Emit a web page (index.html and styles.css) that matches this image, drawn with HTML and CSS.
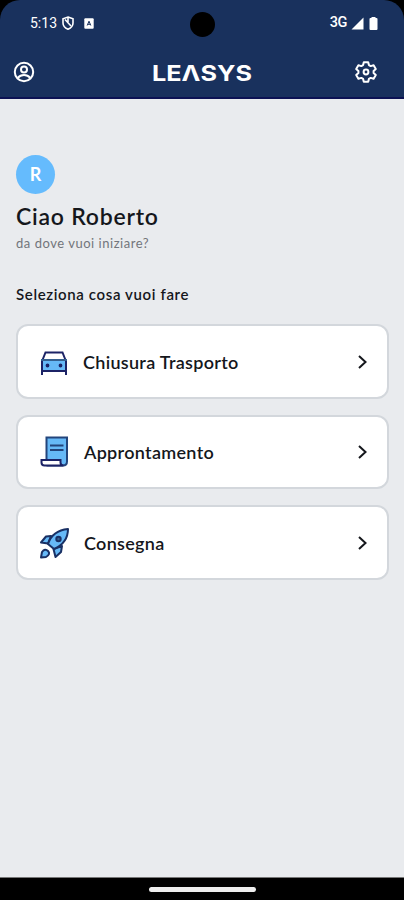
FILE: index.html
```html
<!DOCTYPE html>
<html lang="it">
<head>
<meta charset="utf-8">
<meta name="viewport" content="width=device-width, initial-scale=1">
<title>Leasys</title>
<link rel="stylesheet" href="styles.css">
</head>
<body>
<div class="phone">
  <header class="header">
    <div class="status">
      <span class="clock">5:13</span>
      <svg class="shield" width="14" height="14" viewBox="0 0 14 14"><path d="M7 1 12 2.800V7c0 2.800-2 5-5 6.200C4 12 2 9.800 2 7V2.800Z" fill="none" stroke="#fff" stroke-width="1.600"/><path d="M4 3.500 10 10M7 2v4" stroke="#fff" stroke-width="1.600"/></svg>
      <svg class="app" width="10" height="11" viewBox="0 0 10 11"><rect x=".3" y=".3" width="9.400" height="10.400" rx="1" fill="#fff"/><path d="m3.200 7.500 1.800-4.300 1.800 4.300M3.800 6.300h2.400" fill="none" stroke="#19315d" stroke-width="1"/></svg>
      <i class="camera"></i>
      <span class="network">3G</span>
      <svg class="signal" width="13" height="13" viewBox="0 0 13 13"><path d="M12.500.5v12H.5Z" fill="#fff"/></svg>
      <svg class="battery" width="9" height="13" viewBox="0 0 9 13"><path d="M2.500 0h4v1h1q1 0 1 1v10q0 1-1 1h-6q-1 0-1-1V2q0-1 1-1h1Z" fill="#fff"/></svg>
    </div>
    <nav class="bar">
      <svg class="user" width="22" height="22" viewBox="0 0 22 22" fill="none" stroke="#fff" stroke-width="2"><circle cx="11" cy="11" r="9.200"/><circle cx="11" cy="8.500" r="3"/><path d="M4.800 16.800c3.200-3.900 9.200-3.900 12.400 0"/></svg>
      <svg class="logo" width="104" height="34" viewBox="0 0 104 34"><text x="2" y="25.500" textLength="100" lengthAdjust="spacingAndGlyphs">LEΛSYS</text></svg>
      <svg class="gear" width="24" height="24" viewBox="0 0 24 24" fill="none" stroke="#fff" stroke-width="2" stroke-linejoin="round"><path d="M9.800 2.200h4.400l.7 2.900 1.800 1 2.900-.9 2.200 3.800-2.200 2v2l2.200 2-2.200 3.800-2.900-.9-1.800 1-.7 2.900H9.800l-.7-2.900-1.800-1-2.900.9L2.200 15l2.200-2v-2L2.200 9l2.200-3.800 2.900.9 1.800-1Z"/><circle cx="12" cy="12" r="2.400"/></svg>
    </nav>
  </header>
  <main class="content">
    <div class="avatar">R</div>
    <h1 class="greeting">Ciao Roberto</h1>
    <p class="hint">da dove vuoi iniziare?</p>
    <h2 class="prompt">Seleziona cosa vuoi fare</h2>
    <div class="cards">
      <a class="card">
        <svg class="icon" width="32" height="32" viewBox="0 0 32 32" fill="none" stroke="#1c2366" stroke-width="2"><path d="M4.500 14 7.500 6.500h17l3 7.500" fill="#fff"/><path d="M4 14h24v11H4Z" fill="#66b9f7" stroke="#35608f"/><path d="M3 25h26M4 15v14M28 15v14" stroke-width="2"/><circle cx="9.500" cy="19.500" r=".9"/><circle cx="22.500" cy="19.500" r=".9"/></svg>
        <span class="label transport">Chiusura Trasporto</span>
        <svg class="chevron" width="12" height="16" viewBox="0 0 12 16"><path d="m2 2 6.500 6L2 14"/></svg>
      </a>
      <a class="card">
        <svg class="icon" width="32" height="32" viewBox="0 0 32 32" fill="none" stroke="#23457c" stroke-width="2"><path d="M8.500 24V1.500H29V25.500q0 4-4 4H8.500" fill="#66b9f7"/><path d="M12 9.500H25.500M12 14H25.500"/><path d="M3.500 24H22.500v2.500q0 3 3 3H6.500q-3 0-3-3Z" fill="#fff" stroke="#1c2366"/></svg>
        <span class="label prep">Approntamento</span>
        <svg class="chevron" width="12" height="16" viewBox="0 0 12 16"><path d="m2 2 6.500 6L2 14"/></svg>
      </a>
      <a class="card">
        <svg class="icon" width="32" height="32" viewBox="0 0 32 32" fill="#66b9f7" stroke="#193064" stroke-width="2" stroke-linejoin="round"><path d="m13 9-5 .5-5 6 7 1ZM24 19l-1 6-5.500 5-2-8Z"/><path d="M10 17C13 8 19 3 30 2c0 10-5 16-14 20Z"/><path d="M3 30.500 4 25q3-4 6-1 3 3-2 6Z"/><circle cx="20.500" cy="12" r="2.200" fill="#35608f"/></svg>
        <span class="label delivery">Consegna</span>
        <svg class="chevron" width="12" height="16" viewBox="0 0 12 16"><path d="m2 2 6.500 6L2 14"/></svg>
      </a>
    </div>
  </main>
  <footer class="navbar"><i class="handle"></i></footer>
</div>
</body>
</html>
```
FILE: styles.css
```css
* { box-sizing: border-box; }
body { margin: 0; background: #000; font-family: Lato, sans-serif; color: #15171c; }
.phone { width: 404px; height: 900px; display: flex; flex-direction: column; background: #000; overflow: hidden; }
.header { height: 99px; flex: none; background: #19315d; border-bottom: 2px solid #0c1254; border-radius: 20px 20px 0 0; }
.status { position: relative; height: 46px; display: flex; align-items: center; padding: 0 26px 0 30px; color: #fff; font: 400 14px/46px Roboto, sans-serif; }
.clock { width: 31px; }
.app { margin-left: 9px; }
.camera { position: absolute; left: 190px; top: 12px; width: 25px; height: 25px; border-radius: 50%; background: #000; }
.network { margin-left: auto; font-size: 14.500px; font-weight: 500; letter-spacing: -.4px; }
.signal { margin-left: 4px; }
.battery { margin-left: 5px; }
.bar { height: 52px; display: flex; align-items: center; justify-content: space-between; padding: 0 26px 0 13px; }
.logo { margin-left: 14px; }
.logo text { font: 700 21.500px/1 Inter, sans-serif; fill: #fff; }
.content { flex: 1; background: #e9ebee; padding: 56px 15px 0 16px; }
.avatar { width: 39px; height: 39px; border-radius: 50%; background: #65bbfd; color: #fff; font-size: 18px; font-weight: 700; line-height: 39px; text-align: center; }
.greeting { margin: 7px 0 0; font-size: 23px; font-weight: 600; line-height: 30px; letter-spacing: .76px; }
.hint { margin: 3px 0 0; font-size: 13px; line-height: 18px; letter-spacing: .53px; color: #72757b; }
.prompt { margin: 32px 0 0; font-size: 15px; font-weight: 600; line-height: 20px; letter-spacing: .63px; }
.cards { display: flex; flex-direction: column; gap: 16px; margin-top: 20px; }
.card { height: 74.500px; display: flex; align-items: center; background: #fff; border: 2px solid #d3d7dc; border-radius: 12px; padding: 1px 18px 0 20px; }
.icon { flex: none; }
.label { flex: 1; margin: 0 0 0 14px; font-size: 18px; font-weight: 600; line-height: 24px; letter-spacing: .3px; }
.transport { margin-left: 13px; }
.chevron { fill: none; stroke: #15171c; stroke-width: 2; }
.navbar { height: 23px; flex: none; border-top: 1px solid #777; display: flex; align-items: center; justify-content: center; }
.handle { width: 107px; height: 5px; border-radius: 3px; background: #eee; }
```
